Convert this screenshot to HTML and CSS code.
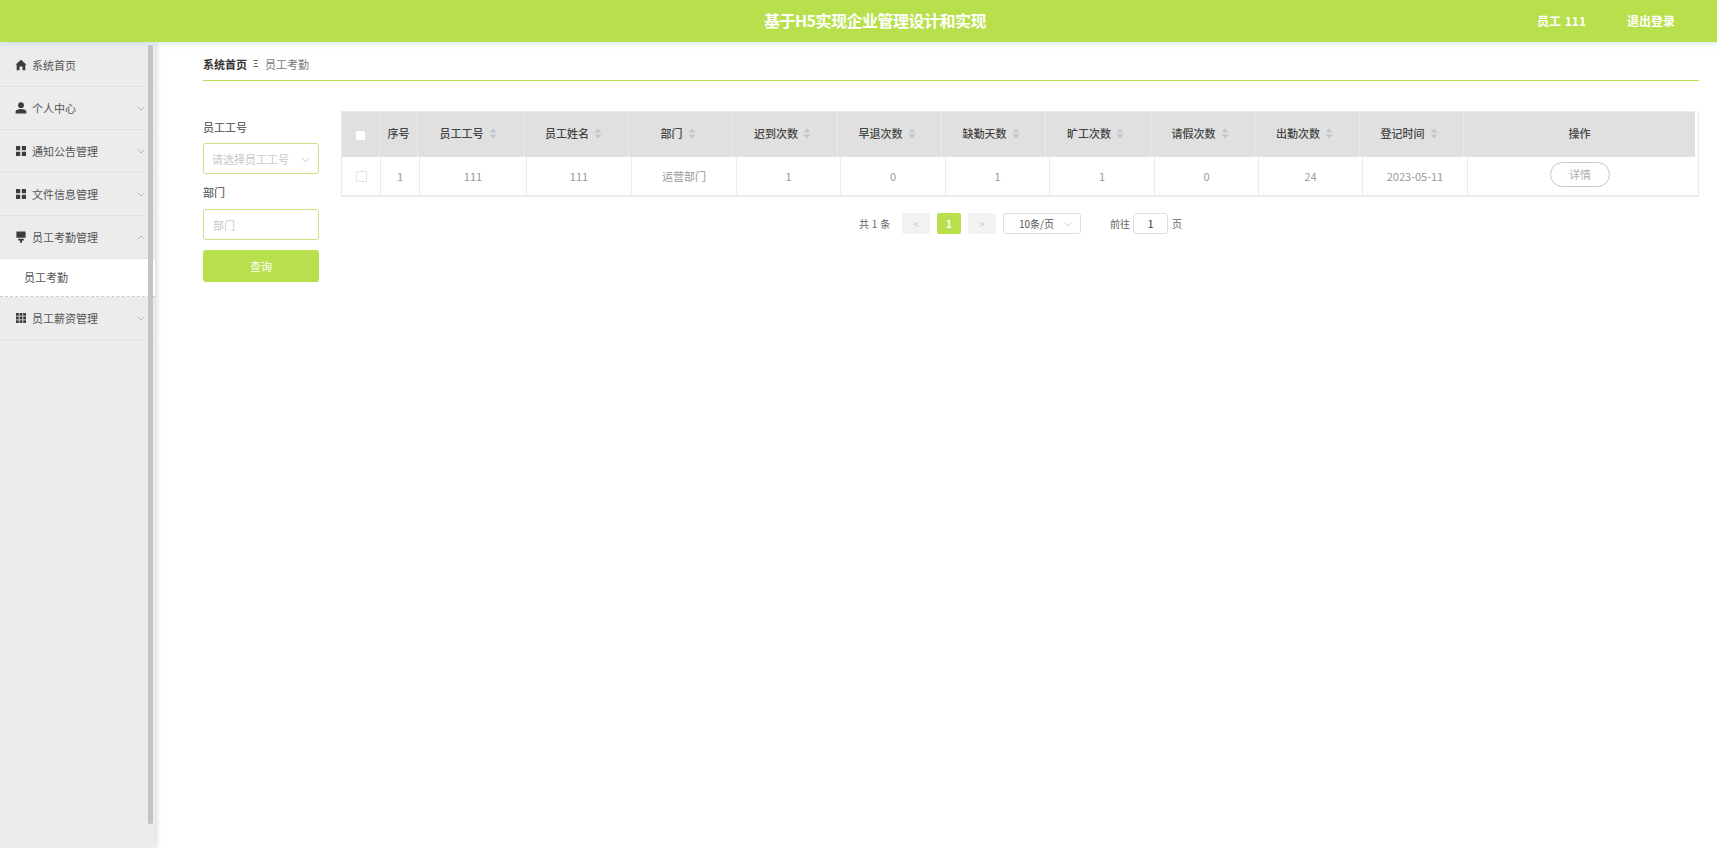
FILE: index.html
```html
<!DOCTYPE html>
<html lang="zh-CN">
<head>
<meta charset="utf-8">
<title>员工考勤</title>
<link rel="stylesheet" href="styles.css">
</head>
<body>
<header class="topbar">
  <h1 class="site-title">基于H5实现企业管理设计和实现</h1>
  <div class="user-name">员工 111</div>
  <a class="logout">退出登录</a>
</header>
<div class="layout">
  <aside class="sidebar">
    <nav class="menu">
      <div class="menu-item">
        <svg class="mi" viewBox="0 0 12 12"><path d="M6 .8 11.6 5.8H10.300V11.200H7.500V7.600H4.500V11.200H1.700V5.800H.4Z"/></svg>
        <span>系统首页</span>
      </div>
      <div class="menu-item">
        <svg class="mi" viewBox="0 0 12 12"><circle cx="6" cy="3.2" r="2.9"/><path d="M.6 11.6V9.6C.6 7.8 3 6.9 6 6.9S11.4 7.8 11.4 9.6V11.6Z"/></svg>
        <span>个人中心</span>
        <svg class="chev" viewBox="0 0 8 5"><path d="M.5.5 4 4 7.500.5"/></svg>
      </div>
      <div class="menu-item">
        <svg class="mi" viewBox="0 0 12 12"><path d="M1 1H5.200V5.200H1ZM6.800 1H11V5.200H6.800ZM1 6.800H5.200V11H1ZM6.800 6.800H11V11H6.800Z"/></svg>
        <span>通知公告管理</span>
        <svg class="chev" viewBox="0 0 8 5"><path d="M.5.5 4 4 7.500.5"/></svg>
      </div>
      <div class="menu-item">
        <svg class="mi" viewBox="0 0 12 12"><path d="M1 1H5.200V5.200H1ZM6.800 1H11V5.200H6.800ZM1 6.800H5.200V11H1ZM6.800 6.800H11V11H6.800Z"/></svg>
        <span>文件信息管理</span>
        <svg class="chev" viewBox="0 0 8 5"><path d="M.5.5 4 4 7.500.5"/></svg>
      </div>
      <div class="menu-item">
        <svg class="mi" viewBox="0 0 12 12"><path d="M1.400 .6H10.600V6.800H1.400ZM3.200 7.800H8.800V9.400H7V11.800H5V9.400H3.200Z"/></svg>
        <span>员工考勤管理</span>
        <svg class="chev" viewBox="0 0 8 5"><path d="M.5 4.500 4 1 7.500 4.500"/></svg>
      </div>
      <div class="submenu-item">员工考勤</div>
      <div class="menu-item">
        <svg class="mi" viewBox="0 0 12 12"><path d="M1 1H3.800V3.800H1ZM4.600 1H7.400V3.800H4.600ZM8.200 1H11V3.800H8.200ZM1 4.600H3.800V7.400H1ZM4.600 4.600H7.400V7.400H4.600ZM8.200 4.600H11V7.400H8.200ZM1 8.200H3.800V11H1ZM4.600 8.200H7.400V11H4.600ZM8.200 8.200H11V11H8.200Z"/></svg>
        <span>员工薪资管理</span>
        <svg class="chev" viewBox="0 0 8 5"><path d="M.5.5 4 4 7.500.5"/></svg>
      </div>
    </nav>
    <div class="scroll-thumb"></div>
  </aside>
  <main class="content">
    <div class="breadcrumb">
      <strong class="crumb-home">系统首页</strong>
      <span class="crumb-sep">Ξ</span>
      <span class="crumb-cur">员工考勤</span>
    </div>
    <div class="workspace">
      <form class="filters">
        <label class="f-label">员工工号</label>
        <div class="f-control f-select">
          <span class="ph">请选择员工工号</span>
          <svg class="sel-chev" viewBox="0 0 8 5"><path d="M.5.5 4 4 7.500.5"/></svg>
        </div>
        <label class="f-label f-label-2">部门</label>
        <div class="f-control"><span class="ph ph-2">部门</span></div>
        <button class="query" type="button">查询</button>
      </form>
      <section class="data">
        <div class="table">
          <div class="row head">
            <div class="c"><span class="cb cb-head"></span></div>
            <div class="c">序号</div>
            <div class="c s">员工工号<svg class="sort" viewBox="0 0 8 11"><path d="M4 .5 7.500 4.500H.5ZM4 10.500 .5 6.500H7.500Z"/></svg></div>
            <div class="c s">员工姓名<svg class="sort" viewBox="0 0 8 11"><path d="M4 .5 7.500 4.500H.5ZM4 10.500 .5 6.500H7.500Z"/></svg></div>
            <div class="c s">部门<svg class="sort" viewBox="0 0 8 11"><path d="M4 .5 7.500 4.500H.5ZM4 10.500 .5 6.500H7.500Z"/></svg></div>
            <div class="c s">迟到次数<svg class="sort" viewBox="0 0 8 11"><path d="M4 .5 7.500 4.500H.5ZM4 10.500 .5 6.500H7.500Z"/></svg></div>
            <div class="c s">早退次数<svg class="sort" viewBox="0 0 8 11"><path d="M4 .5 7.500 4.500H.5ZM4 10.500 .5 6.500H7.500Z"/></svg></div>
            <div class="c s">缺勤天数<svg class="sort" viewBox="0 0 8 11"><path d="M4 .5 7.500 4.500H.5ZM4 10.500 .5 6.500H7.500Z"/></svg></div>
            <div class="c s">旷工次数<svg class="sort" viewBox="0 0 8 11"><path d="M4 .5 7.500 4.500H.5ZM4 10.500 .5 6.500H7.500Z"/></svg></div>
            <div class="c s">请假次数<svg class="sort" viewBox="0 0 8 11"><path d="M4 .5 7.500 4.500H.5ZM4 10.500 .5 6.500H7.500Z"/></svg></div>
            <div class="c s">出勤次数<svg class="sort" viewBox="0 0 8 11"><path d="M4 .5 7.500 4.500H.5ZM4 10.500 .5 6.500H7.500Z"/></svg></div>
            <div class="c s">登记时间<svg class="sort" viewBox="0 0 8 11"><path d="M4 .5 7.500 4.500H.5ZM4 10.500 .5 6.500H7.500Z"/></svg></div>
            <div class="c">操作</div>
          </div>
          <div class="row body">
            <div class="c"><span class="cb"></span></div>
            <div class="c">1</div>
            <div class="c">111</div>
            <div class="c">111</div>
            <div class="c">运营部门</div>
            <div class="c">1</div>
            <div class="c">0</div>
            <div class="c">1</div>
            <div class="c">1</div>
            <div class="c">0</div>
            <div class="c">24</div>
            <div class="c">2023-05-11</div>
            <div class="c"><button class="detail" type="button">详情</button></div>
          </div>
        </div>
        <div class="pager">
          <span class="total">共 1 条</span>
          <span class="pg pg-nav">&lt;</span>
          <span class="pg pg-on">1</span>
          <span class="pg pg-nav">&gt;</span>
          <span class="size">10条/页<svg class="size-chev" viewBox="0 0 8 5"><path d="M.5.5 4 4 7.500.5"/></svg></span>
          <span class="goto">前往</span>
          <span class="jump">1</span>
          <span class="page-word">页</span>
        </div>
      </section>
    </div>
  </main>
</div>
</body>
</html>
```
FILE: styles.css
```css
* { box-sizing: border-box; }
html, body { margin: 0; height: 100%; }
body {
  width: 1717px;
  height: 848px;
  overflow: hidden;
  background: #fff;
  color: #666;
  font-family: "Noto Sans CJK SC", "Open Sans", sans-serif;
  font-size: 11px;
  display: flex;
  flex-direction: column;
}

/* top bar */
.topbar {
  flex: 0 0 42px;
  background: #b8df4c;
  box-shadow: 0 1px 6px rgba(170, 205, 225, .55);
  color: #fff;
  display: flex;
  align-items: center;
  padding-bottom: 2px;
  position: relative;
  z-index: 2;
}
.site-title {
  margin: 0 0 0 764px;
  width: 222px;
  font-size: 16px;
  font-weight: 700;
  letter-spacing: -.5px;
  white-space: nowrap;
}
.user-name { margin-left: 551px; font-size: 12px; font-weight: 700; width: 90px; white-space: nowrap; word-spacing: 1px; }
.logout { font-size: 12px; font-weight: 700; white-space: nowrap; }

.layout { flex: 1; display: flex; min-height: 0; }

/* sidebar */
.sidebar {
  flex: 0 0 155px;
  background: #ececec;
  box-shadow: 2px 0 5px rgba(0, 0, 0, .14);
  padding-top: 2px;
  position: relative;
}
.menu-item {
  height: 43px;
  border-bottom: 1.500px solid #e2e2e2;
  display: flex;
  align-items: center;
  padding: 0 10px 0 15px;
  color: #555;
}
.mi { width: 12px; height: 12px; margin-right: 5px; fill: #3c3c3e; flex: none; }
.chev { margin-left: auto; width: 8px; height: 5px; fill: none; stroke: #aaa; stroke-width: .8; flex: none; }
.submenu-item {
  height: 38px;
  background: #fff;
  border-bottom: 1px dashed #ccc;
  display: flex;
  align-items: center;
  padding: 0 0 2px 24px;
  color: #555;
}
.scroll-thumb {
  position: absolute;
  top: 3px;
  right: 2px;
  width: 5px;
  height: 779px;
  background: #c4c4c7;
  border-radius: 2px;
}

/* content */
.content { flex: 1; padding: 0 18px 0 48px; min-width: 0; }
.breadcrumb {
  height: 39px;
  border-bottom: 1px solid #b8df4c;
  display: flex;
  align-items: center;
  padding-top: 5px;
  white-space: nowrap;
}
.crumb-home { color: #333; font-weight: 700; }
.crumb-sep { color: #333; margin: 0 6px; font-size: 9px; width: 6px; }
.crumb-cur { color: #777; }

.workspace { display: flex; margin-top: 30px; }
.filters { flex: 0 0 116px; margin-right: 22px; display: flex; flex-direction: column; }
.f-label { height: 16px; margin-top: 8px; line-height: 16px; color: #666; font-weight: 500; white-space: nowrap; }
.f-label-2 { margin-top: 10px; height: 17px; }
.f-control {
  margin-top: 8px;
  height: 31px;
  border: 1px solid #c8e384;
  border-radius: 3px;
  background: #fff;
  display: flex;
  align-items: center;
  padding-left: 8px;
  position: relative;
}
.ph { color: #c6c8cc; white-space: nowrap; }
.ph-2 { margin-left: 1px; }
.sel-chev { position: absolute; right: 8px; top: 13px; width: 9px; height: 6px; fill: none; stroke: #c0c4cc; stroke-width: .8; }
.query {
  margin-top: 10px;
  height: 32px;
  border: 0;
  border-radius: 3px;
  background: #b8df4c;
  color: #fff;
  font: inherit;
  padding: 0;
}

/* table */
.data { flex: 1; min-width: 0; }
.table {
  width: 1358px;
  height: 86px;
  border: 1px solid #ebebeb;
  border-top: 0;
  border-bottom-width: 2px;
}
.row { display: grid; }
.head {
  height: 46px;
  width: 1353px;
  background: #e0e0e0;
  border-top: 1px solid #ebebeb;
  grid-template-columns: 38px 38px 106px 105px 104px 105px 104px 104px 105px 104px 105px 104px 231px;
  color: #444;
  font-weight: 500;
}
.body {
  height: 38px;
  grid-template-columns: 39px 39px 107px 105px 105px 104px 105px 104px 105px 104px 104px 105px 230px;
  color: #999;
}
.c {
  display: flex;
  align-items: center;
  justify-content: center;
  white-space: nowrap;
}
.head .c { border-right: 1px solid #ebebeb; padding-bottom: 3px; }
.head .s { padding-right: 5px; }
.head .c:last-child { border-right: 0; }
.body .c { border-right: 1px solid #ebebeb; }
.body .c:last-child { border-right: 0; }
.sort { width: 8px; height: 11px; margin-left: 5px; fill: #c2c5cc; }
.cb { width: 11px; height: 11px; border: 1px solid #e2e2e8; border-radius: 1px; background: #fff; }
.cb-head { border-color: #fff; width: 9px; height: 9px; margin-top: 4px; }
.detail {
  width: 60px;
  height: 25px;
  margin: 0 6px 4px 0;
  border: 1px solid #c8c8c8;
  border-radius: 13px;
  background: #fff;
  color: #b0b0b0;
  font: inherit;
  padding: 0;
}

/* pagination */
.pager {
  display: flex;
  align-items: center;
  height: 21px;
  margin-top: 16px;
  padding-left: 518px;
  color: #666;
  font-size: 10px;
  white-space: nowrap;
}
.total { width: 43px; letter-spacing: .3px; }
.pg {
  width: 28px;
  height: 21px;
  margin-right: 7px;
  display: flex;
  align-items: center;
  justify-content: center;
  background: #f2f2f2;
  color: #c0c4cc;
  border-radius: 2px;
}
.pg-on { width: 24px; background: #b8df4c; color: #fff; font-weight: 700; }
.size {
  width: 78px;
  height: 21px;
  margin-right: 29px;
  border: 1px solid #dcdfe6;
  border-radius: 3px;
  display: flex;
  align-items: center;
  padding-left: 15px;
  color: #555;
  position: relative;
}
.size-chev { position: absolute; right: 8px; top: 8px; width: 8px; height: 5px; fill: none; stroke: #c0c4cc; stroke-width: .8; }
.goto { width: 23px; }
.jump {
  width: 35px;
  height: 21px;
  border: 1px solid #dcdfe6;
  border-radius: 3px;
  margin-right: 4px;
  display: flex;
  align-items: center;
  justify-content: center;
  color: #555;
  font-weight: 500;
}
```
